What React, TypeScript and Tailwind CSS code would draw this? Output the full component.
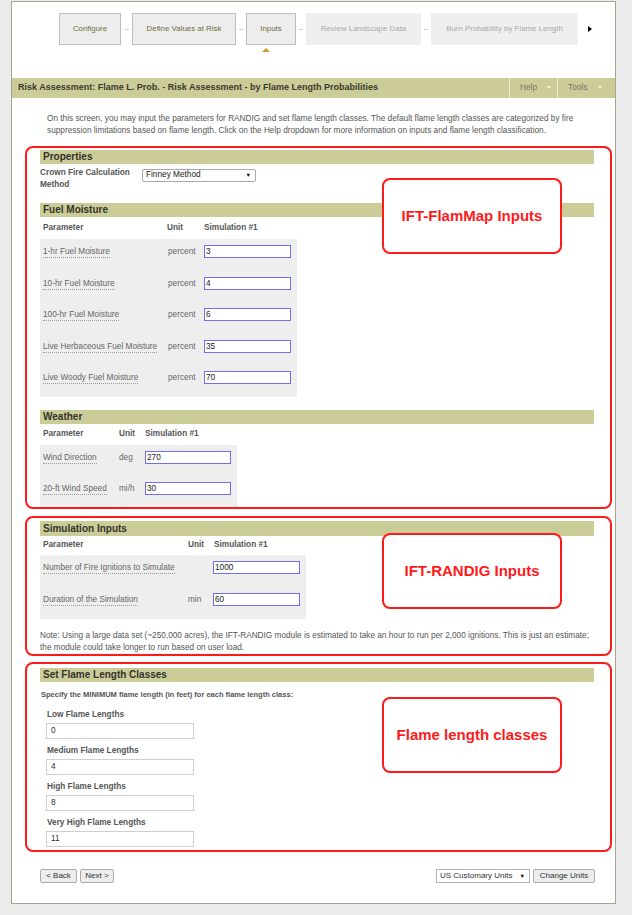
import React from "react";

const F = "font-['Liberation_Sans',Arial,sans-serif]";

function NavBox({ label, w, active }: { label: string; w: string; active: boolean }) {
  return (
    <div
      className={
        "h-[32px] flex items-center justify-center text-[7.9px] " +
        w +
        (active
          ? " border border-[#bdbdbd] bg-[#ededed] text-[#6e6e3c]"
          : " border border-[#f0f0f0] bg-[#efefef] text-[#a9a9a9]")
      }
    >
      {label}
    </div>
  );
}

function Conn({ w }: { w: string }) {
  return (
    <div className={"h-[32px] flex items-center justify-center " + w}>
      <div className="w-[4px] h-px bg-[#cfcfcf]" />
    </div>
  );
}

function SectionHeader({ title }: { title: string }) {
  return (
    <div className="h-[14px] bg-[#cccc99] pl-[3px] text-[10px] font-bold leading-[14px] text-[#33332a]">
      {title}
    </div>
  );
}

function Param({ children }: { children: React.ReactNode }) {
  return (
    <span className="border-b border-dotted border-[#9a9a9a] text-[#666] leading-[11px] inline-block">
      {children}
    </span>
  );
}

function BlueInput({ value, w }: { value: string; w: string }) {
  return (
    <input
      readOnly
      value={value}
      className={
        "block h-[13px] border border-[#7070ee] bg-white px-[1px] text-[8.25px] leading-[11px] text-[#222] outline-none " +
        w
      }
    />
  );
}

function Callout({ text, top }: { text: string; top: string }) {
  return (
    <div
      className={
        "absolute left-[355px] w-[180px] h-[76px] rounded-[8px] border-2 border-[#ff1a1a] bg-white flex items-center justify-center text-[15px] font-bold text-[#ff1a1a] " +
        top
      }
    >
      {text}
    </div>
  );
}

function FlameGroup({ label, value, last }: { label: string; value: string; last?: boolean }) {
  return (
    <div className={"pl-[6px] " + (last ? "" : "mb-[6px]")}>
      <div className="text-[8.25px] font-bold leading-[12px] text-[#555] mb-[2px] pl-px">{label}</div>
      <input
        readOnly
        value={value}
        className="block w-[148px] h-[16px] border border-[#cfcfcf] bg-white pl-[4px] text-[8.25px] text-[#333] outline-none"
      />
    </div>
  );
}

export default function App() {
  return (
    <div className={"w-[632px] min-h-[915px] bg-[#ebebeb] pt-px " + F}>
      <div className="ml-[11px] w-[605px] border border-[#a6a68e] bg-white">
        {/* Nav */}
        <div className="flex items-start pl-[47px] pt-[11px]">
          <NavBox label="Configure" w="w-[62px]" active />
          <Conn w="w-[11px]" />
          <NavBox label="Define Values at Risk" w="w-[104px]" active />
          <Conn w="w-[10px]" />
          <div className="relative">
            <NavBox label="Inputs" w="w-[50px]" active />
            <div className="absolute left-[16px] top-[35px] w-0 h-0 border-l-[4px] border-r-[4px] border-b-[4px] border-l-transparent border-r-transparent border-b-[#d09a2c]" />
          </div>
          <Conn w="w-[10px]" />
          <NavBox label="Review Landscape Data" w="w-[115px]" active={false} />
          <Conn w="w-[10px]" />
          <NavBox label="Burn Probability by Flame Length" w="w-[147px]" active={false} />
          <div className="h-[32px] w-[14px] flex items-center justify-end">
            <div className="w-0 h-0 border-t-[3px] border-b-[3px] border-l-[4px] border-t-transparent border-b-transparent border-l-black" />
          </div>
        </div>

        {/* Header bar */}
        <div className="mt-[33px] h-[20px] bg-[#cccc99] flex items-stretch">
          <div className="flex-1 pl-[6px] flex items-center text-[9px] font-bold text-[#3a3a2c]">
            Risk Assessment: Flame L. Prob. - Risk Assessment - by Flame Length Probabilities
          </div>
          <div className="w-[48px] border-l border-[#ecebd8] flex items-center pl-[10px] text-[8.25px] text-[#777766] relative">
            Help
            <div className="absolute left-[37px] top-[8px] w-0 h-0 border-l-[2.5px] border-r-[2.5px] border-t-[3px] border-l-transparent border-r-transparent border-t-[#f4f4ea]" />
          </div>
          <div className="w-[58px] border-l border-[#ecebd8] flex items-center pl-[10px] text-[8.25px] text-[#777766] relative">
            Tools
            <div className="absolute left-[40px] top-[8px] w-0 h-0 border-l-[2.5px] border-r-[2.5px] border-t-[3px] border-l-transparent border-r-transparent border-t-[#f4f4ea]" />
          </div>
        </div>

        {/* Intro */}
        <div className="pt-[15px] pl-[35px] text-[8.25px] leading-[12px] text-[#555]">
          On this screen, you may input the parameters for RANDIG and set flame length classes. The default flame length classes are categorized by fire
          <br />
          suppression limitations based on flame length. Click on the Help dropdown for more information on inputs and flame length classification.
        </div>

        {/* Box 1 */}
        <div className="relative mt-[9px] ml-[13px] w-[587px] rounded-[8px] border-2 border-[#ff1a1a] pl-[13px] pr-[16px] pt-[2px]">
          <SectionHeader title="Properties" />
          <div className="mt-[3px] flex">
            <div className="w-[102px] text-[8.25px] font-bold leading-[12px] text-[#555]">
              Crown Fire Calculation
              <br />
              Method
            </div>
            <div className="mt-[2px] w-[114px] h-[13px] rounded-[2px] border border-[#a9a9a9] bg-white flex items-center justify-between pl-[3px] pr-[4px] text-[8.25px] text-[#222]">
              <span>Finney Method</span>
              <span className="text-[5.5px] text-black">▼</span>
            </div>
          </div>

          <div className="mt-[12px]">
            <SectionHeader title="Fuel Moisture" />
          </div>
          <div className="w-[257px] text-[8.25px]">
            <div className="grid grid-cols-[125px_36px_96px] h-[22px] items-center font-bold text-[#555]">
              <div className="pl-[3px]">Parameter</div>
              <div className="pl-[2px]">Unit</div>
              <div className="pl-[3px]">Simulation #1</div>
            </div>
            <div className="bg-[#eeeeee]">
              {[
                ["1-hr Fuel Moisture", "3"],
                ["10-hr Fuel Moisture", "4"],
                ["100-hr Fuel Moisture", "6"],
                ["Live Herbaceous Fuel Moisture", "35"],
                ["Live Woody Fuel Moisture", "70"],
              ].map(([p, v]) => (
                <div key={p} className="grid grid-cols-[125px_36px_96px] h-[31.6px] pt-[6px] items-start">
                  <div className="pl-[3px] leading-[13px]">
                    <Param>{p}</Param>
                  </div>
                  <div className="pl-[3px] leading-[13px] text-[#666]">percent</div>
                  <div className="pl-[3px]">
                    <BlueInput value={v} w="w-[87px]" />
                  </div>
                </div>
              ))}
            </div>
          </div>

          <div className="mt-[13px]">
            <SectionHeader title="Weather" />
          </div>
          <div className="w-[197px] text-[8.25px]">
            <div className="grid grid-cols-[76px_26px_95px] h-[21px] items-center font-bold text-[#555]">
              <div className="pl-[3px]">Parameter</div>
              <div className="pl-[3px]">Unit</div>
              <div className="pl-[3px]">Simulation #1</div>
            </div>
            <div className="bg-[#eeeeee]">
              {[
                ["Wind Direction", "deg", "270"],
                ["20-ft Wind Speed", "mi/h", "30"],
              ].map(([p, u, v]) => (
                <div key={p} className="grid grid-cols-[76px_26px_95px] h-[31px] pt-[6px] items-start">
                  <div className="pl-[3px] leading-[13px]">
                    <Param>{p}</Param>
                  </div>
                  <div className="pl-[3px] leading-[13px] text-[#666]">{u}</div>
                  <div className="pl-[3px]">
                    <BlueInput value={v} w="w-[86px]" />
                  </div>
                </div>
              ))}
            </div>
          </div>

          <Callout text="IFT-FlamMap Inputs" top="top-[30px]" />
        </div>

        {/* Box 2 */}
        <div className="relative mt-[7px] ml-[13px] w-[587px] rounded-[8px] border-2 border-[#ff1a1a] pl-[13px] pr-[16px] pt-[3px]">
          <div className="h-[15px] bg-[#cccc99] pl-[3px] text-[10px] font-bold leading-[15px] text-[#33332a]">
            Simulation Inputs
          </div>
          <div className="w-[266px] text-[8.25px]">
            <div className="grid grid-cols-[145px_25px_96px] h-[19px] items-center font-bold text-[#555]">
              <div className="pl-[3px]">Parameter</div>
              <div className="pl-[3px]">Unit</div>
              <div className="pl-[4px]">Simulation #1</div>
            </div>
            <div className="bg-[#eeeeee]">
              {[
                ["Number of Fire Ignitions to Simulate", "", "1000"],
                ["Duration of the Simulation", "min", "60"],
              ].map(([p, u, v]) => (
                <div key={p} className="grid grid-cols-[145px_25px_96px] h-[32px] pt-[6px] items-start">
                  <div className="pl-[3px] leading-[13px]">
                    <Param>{p}</Param>
                  </div>
                  <div className="pl-[3px] leading-[13px] text-[#666]">{u}</div>
                  <div className="pl-[3px]">
                    <BlueInput value={v} w="w-[87px]" />
                  </div>
                </div>
              ))}
            </div>
          </div>
          <div className="mt-[11px] text-[8.25px] leading-[12px] text-[#555]">
            Note: Using a large data set (~250,000 acres), the IFT-RANDIG module is estimated to take an hour to run per 2,000 ignitions. This is just an estimate;
            <br />
            the module could take longer to run based on user load.
          </div>
          <Callout text="IFT-RANDIG Inputs" top="top-[15px]" />
        </div>

        {/* Box 3 */}
        <div className="relative mt-[6px] ml-[13px] w-[587px] rounded-[8px] border-2 border-[#ff1a1a] pl-[13px] pr-[16px] pt-[4px] pb-[3px]">
          <SectionHeader title="Set Flame Length Classes" />
          <div className="mt-[7px] pl-px text-[7.5px] font-bold leading-[12px] text-[#555]">
            Specify the MINIMUM flame length (in feet) for each flame length class:
          </div>
          <div className="mt-[8px]">
            <FlameGroup label="Low Flame Lengths" value="0" />
            <FlameGroup label="Medium Flame Lengths" value="4" />
            <FlameGroup label="High Flame Lengths" value="8" />
            <FlameGroup label="Very High Flame Lengths" value="11" last />
          </div>
          <Callout text="Flame length classes" top="top-[33px]" />
        </div>

        {/* Footer */}
        <div className="mt-[17px] pb-[20px] pl-[28px] pr-[20px] flex items-center justify-between text-[8px] text-[#333]">
          <div className="flex gap-[3px]">
            <div className="h-[14px] w-[37px] border border-[#acacac] rounded-[2px] bg-[#ededed] flex items-center justify-center">
              &lt; Back
            </div>
            <div className="h-[14px] w-[34px] border border-[#acacac] rounded-[2px] bg-[#ededed] flex items-center justify-center">
              Next &gt;
            </div>
          </div>
          <div className="flex gap-[3px]">
            <div className="h-[14px] w-[94px] border border-[#b5b5b5] bg-white flex items-center justify-between pl-[3px] pr-[4px]">
              <span>US Customary Units</span>
              <span className="text-[5.5px] text-black">▼</span>
            </div>
            <div className="h-[14px] w-[62px] border border-[#acacac] rounded-[2px] bg-[#ededed] flex items-center justify-center">
              Change Units
            </div>
          </div>
        </div>
      </div>
    </div>
  );
}
